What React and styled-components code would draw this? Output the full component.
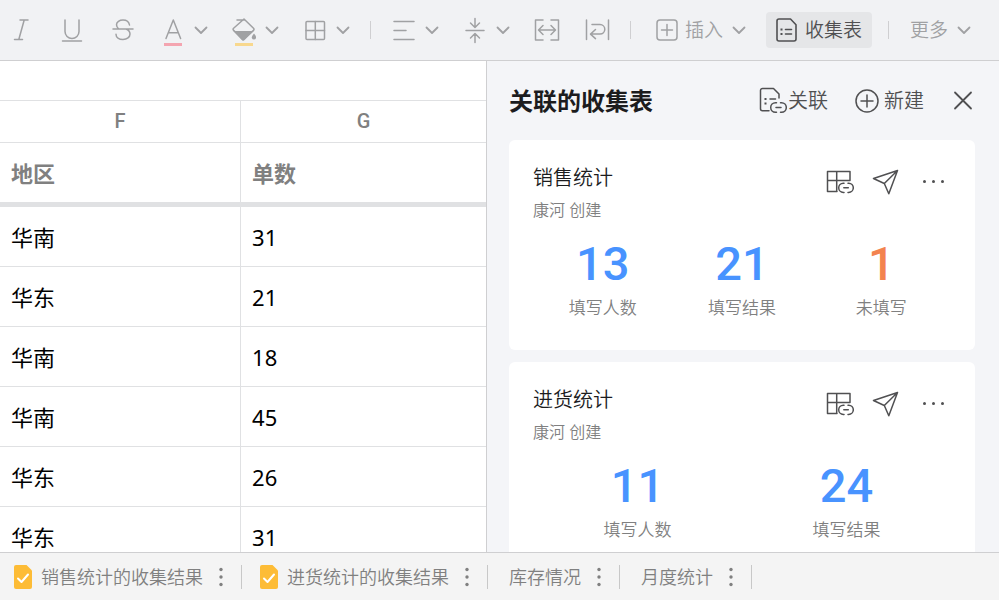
import React from 'react';
import styled, { createGlobalStyle, css } from 'styled-components';

const colors = {
  toolbar: '#f1f2f4',
  panel: '#f4f5f8',
  tabs: '#f4f4f4',
  line: '#cfcfd1',
  grid: '#e0e1e3',
  icon: '#a0a1a3',
  dark: '#505052',
  ink: '#1c1c1e',
  grey: '#808080',
  blue: '#4893ff',
  orange: '#f3834f',
  yellow: '#fdbc36',
};

const GlobalStyle = createGlobalStyle`
  * {
    box-sizing: border-box;
  }
  body {
    margin: 0;
    font-family: 'Noto Sans', 'Noto Sans CJK SC', sans-serif;
    font-weight: 350;
  }
  h2, h3, p, dl, dd {
    margin: 0;
  }
`;

const Page = styled.div`
  height: 100vh;
  display: flex;
  flex-direction: column;
  overflow: hidden;
`;

/* toolbar */

const Toolbar = styled.div`
  flex: none;
  display: flex;
  align-items: center;
  height: 61px;
  padding: 0 27px 0 9px;
  background-color: ${colors.toolbar};
  border-bottom: 1px solid ${colors.line};
`;

const Group = styled.div`
  display: flex;
  align-items: center;
  gap: ${props => props.$gap}px;
  margin-right: ${props => props.$after}px;
`;

const ToolbarEnd = styled.div`
  margin-left: auto;
  display: flex;
  align-items: center;
`;

const Divider = styled.span`
  width: 1px;
  height: 18px;
  margin-right: 21px;
  background-color: ${colors.line};
`;

const Plain = styled.button`
  display: flex;
  align-items: center;
  padding: 0;
  border: 0;
  background: none;
  color: inherit;
  font: inherit;
  white-space: nowrap;
  cursor: pointer;
`;

const Tool = styled(Plain)`
  gap: 8px;
  color: ${colors.icon};
  font-size: 19px;
  line-height: 32px;
`;

const InsertTool = styled(Tool)`
  padding: 0 3px;
  span {
    display: flex;
    align-items: center;
    gap: 6px;
  }
`;

const FormTool = styled(Tool)`
  height: 36px;
  margin-right: 16px;
  padding: 0 10px;
  border-radius: 4px;
  color: ${colors.dark};
  background-color: #e5e6e8;
`;

const Svg = styled.svg`
  flex: none;
  display: block;
  fill: none;
  stroke: currentColor;
  stroke-width: ${props => props.$weight || 1.5};
  stroke-linecap: round;
  stroke-linejoin: round;
  .solid {
    fill: currentColor;
    stroke: none;
  }
`;

/* sheet */

const Main = styled.div`
  flex: 1;
  min-height: 0;
  display: grid;
  grid-template-columns: 487fr 512fr;
`;

const Sheet = styled.div`
  overflow: hidden;
  padding-top: 39px;
  border-right: 1px solid ${colors.line};
  background-color: #fff;
`;

const Table = styled.table`
  width: 100%;
  table-layout: fixed;
  border-collapse: separate;
  border-spacing: 0;
  border-top: 1px solid ${colors.grid};
  font-size: 22px;
  line-height: 32px;
  color: #000;
`;

const cell = css`
  padding: 0 11px;
  text-align: left;
  border-bottom: 1px solid ${colors.grid};
  &:first-child {
    width: 49.6%;
    border-right: 1px solid ${colors.grid};
  }
`;

const Cell = styled.td`
  ${cell}
  height: 60px;
  font-weight: 400;
`;

const Letter = styled.th`
  ${cell}
  height: 42px;
  padding-bottom: 2px;
  text-align: center;
  font-family: Roboto, sans-serif;
  font-size: 20px;
  font-weight: 500;
  color: ${colors.grey};
`;

const Label = styled.th`
  ${cell}
  height: 64px;
  border-bottom: 5px solid ${colors.grid};
  font-weight: 700;
  color: ${colors.grey};
`;

/* side panel */

const Panel = styled.aside`
  overflow: hidden;
  padding: 0 24px 0 22px;
  background-color: ${colors.panel};
`;

const PanelHeader = styled.div`
  display: flex;
  align-items: center;
  justify-content: space-between;
  height: 79px;
`;

const PanelTitle = styled.h2`
  font-size: 24px;
  line-height: 32px;
  color: ${colors.ink};
`;

const PanelActions = styled.div`
  display: flex;
  align-items: center;
  gap: 27px;
  color: ${colors.dark};
`;

const PanelButton = styled(Plain)`
  gap: ${props => props.$gap || 0}px;
  font-size: 20px;
  line-height: 32px;
`;

const Card = styled.section`
  margin-bottom: 12px;
  padding: 22px 24px 26px;
  border-radius: 6px;
  background-color: #fff;
`;

const CardHeader = styled.div`
  display: flex;
  justify-content: space-between;
  line-height: 32px;
`;

const CardTitle = styled.h3`
  font-size: 20px;
  font-weight: 350;
  color: ${colors.ink};
`;

const Author = styled.p`
  font-size: 16px;
  color: ${colors.grey};
`;

const CardActions = styled.div`
  display: flex;
  align-items: flex-start;
  gap: 18px;
  padding: 5px 5px 0 0;
  color: ${colors.dark};
`;

const Stats = styled.dl`
  display: grid;
  grid-auto-flow: column;
  grid-auto-columns: 1fr;
  margin-top: 14px;
  text-align: center;
`;

const Stat = styled.div`
  display: flex;
  flex-direction: column-reverse;
  gap: 4px;
  dt {
    font-size: 17px;
    line-height: 32px;
    color: ${colors.grey};
  }
  dd {
    font-family: Roboto, sans-serif;
    font-size: 47px;
    font-weight: 500;
    line-height: 48px;
    color: ${props => (props.$warn ? colors.orange : colors.blue)};
  }
`;

/* sheet tabs */

const Tabs = styled.nav`
  flex: none;
  display: flex;
  align-items: center;
  height: 48px;
  border-top: 1px solid ${colors.line};
  background-color: ${colors.tabs};
  color: ${colors.grey};
`;

const Tab = styled.div`
  display: flex;
  align-items: center;
  gap: 12px;
  height: 24px;
  padding: 0 14px 0 ${props => (props.$form ? 18 : 21)}px;
  border-right: 1px solid #c8c8c8;
  &:first-child {
    padding-left: 14px;
  }
`;

const TabName = styled(Plain)`
  gap: 9px;
  font-size: 18px;
  line-height: 24px;
`;

const Icon = ({ width = 24, height = 32, weight, children }) => (
  <Svg
    width={ width }
    height={ height }
    viewBox={ `0 0 ${width} ${height}` }
    $weight={ weight }
    aria-hidden="true"
  >
    {children}
  </Svg>
);

const Chevron = () => (
  <Icon width={ 16 } weight={ 1.8 }>
    <path d="M2.5 13.5 8 19l5.5-5.5" />
  </Icon>
);

const FontColor = () => (
  <Icon>
    <path d="M5 24.5 12.3 6l7.3 18.5M7.5 18.8h9.6" />
    <rect x="3" y="29" width="18" height="3" stroke="none" fill="#f4a5b0" />
  </Icon>
);

const FillColor = () => (
  <Icon>
    <path d="M5 6h7M12 5 1.6 14.2a1.6 1.6 0 0 0 0 2.2l9.4 9.2 10.5-9.2a1.6 1.6 0 0 0 0-2.2z" />
    <path className="solid" d="M1.5 17h20.2L12.6 26a2 2 0 0 1-2.8 0z" />
    <path className="solid" d="M22 19.5c1.6 2 2.3 3.2 2 4.4a2.2 2.2 0 0 1-4.2 0c-.2-1.2.6-2.4 2.2-4.4z" />
    <rect x="3" y="29" width="18" height="3" stroke="none" fill="#f8d88e" />
  </Icon>
);

const Borders = () => (
  <Icon>
    <rect x="3" y="7.5" width="18.5" height="18" rx="1" />
    <path d="M12.3 7.5v18M3 16.5h18.5" />
  </Icon>
);

const AlignLeft = () => (
  <Icon>
    <path d="M2 7.5h20M2 16.5h12M2 25.5h20" />
  </Icon>
);

const AlignMiddle = () => (
  <Icon>
    <path d="M3 16.5h18M12 4.5V13M7.5 9l4.5 4.5L16.5 9M12 28.5V20M7.5 24l4.5-4.5 4.5 4.5" />
  </Icon>
);

const FormIcon = () => (
  <Icon width={ 21 } height={ 24 } weight={ 1.6 }>
    <path d="M3 1h11.5L20 6.7V21a2 2 0 0 1-2 2H3a2 2 0 0 1-2-2V3a2 2 0 0 1 2-2zM9.5 11.5h6M9.5 16h6" />
    <rect className="solid" x="4.5" y="10.5" width="2" height="2" />
    <rect className="solid" x="4.5" y="15" width="2" height="2" />
  </Icon>
);

const LinkForm = () => (
  <Icon width={ 28 } height={ 28 }>
    <path d="M10 23.7H3.5a2 2 0 0 1-2-2V3.5a2 2 0 0 1 2-2h11L20 7v4M11 12h5.5" />
    <path d="M17.5 15.7h-1a4.8 4.8 0 0 0 0 9.6h1M21.5 15.7h1a4.8 4.8 0 0 1 0 9.6h-1M17 20.5h5" />
    <rect className="solid" x="5.5" y="11" width="2" height="2" />
    <rect className="solid" x="5.5" y="15.5" width="2" height="2" />
  </Icon>
);

const LinkTable = () => (
  <Icon width={ 28 } height={ 28 }>
    <path d="M11 24.5H1.5v-20H24v9H1.5M10.7 4.5v20" />
    <path d="M18 16.2h-.7a4.6 4.6 0 0 0 0 9.2h.7M22 16.2h.7a4.6 4.6 0 0 1 0 9.2H22M17.8 20.8h4.5" />
  </Icon>
);

const Send = () => (
  <Icon width={ 28 } height={ 28 }>
    <path d="M25.5 3.5 1.5 11.5l10.8 5 4.5 10.3zM25.5 3.5 12.3 16.5" />
  </Icon>
);

const Dots = () => (
  <Icon width={ 28 } height={ 28 }>
    <circle className="solid" cx="6.5" cy="14.5" r="1.5" />
    <circle className="solid" cx="15.5" cy="14.5" r="1.5" />
    <circle className="solid" cx="24.5" cy="14.5" r="1.5" />
  </Icon>
);

const TabDots = () => (
  <Icon width={ 12 } height={ 24 }>
    <circle className="solid" cx="6" cy="4.5" r="1.7" />
    <circle className="solid" cx="6" cy="12" r="1.7" />
    <circle className="solid" cx="6" cy="19.5" r="1.7" />
  </Icon>
);

const TabForm = () => (
  <Icon width={ 18 } height={ 24 } weight={ 2 }>
    <path d="M2 0h10.5L18 5.5V22a2 2 0 0 1-2 2H2a2 2 0 0 1-2-2V2a2 2 0 0 1 2-2z" stroke="none" fill={ colors.yellow } />
    <path d="m4 13.5 3.5 3.5 6.5-7.5" stroke="#fff" />
  </Icon>
);

const rows = [
  ['华南', 31],
  ['华东', 21],
  ['华南', 18],
  ['华南', 45],
  ['华东', 26],
  ['华东', 31],
];

const forms = [
  {
    title: '销售统计',
    stats: [
      { label: '填写人数', value: 13 },
      { label: '填写结果', value: 21 },
      { label: '未填写', value: 1, warn: true },
    ],
  },
  {
    title: '进货统计',
    stats: [
      { label: '填写人数', value: 11 },
      { label: '填写结果', value: 24 },
    ],
  },
];

const tabs = [
  { name: '销售统计的收集结果', form: true },
  { name: '进货统计的收集结果', form: true },
  { name: '库存情况' },
  { name: '月度统计' },
];

const FormCard = ({ title, stats }) => (
  <Card>
    <CardHeader>
      <div>
        <CardTitle>{title}</CardTitle>
        <Author>康河 创建</Author>
      </div>
      <CardActions>
        <Plain aria-label="关联表格"><LinkTable /></Plain>
        <Plain aria-label="发送"><Send /></Plain>
        <Plain aria-label="更多"><Dots /></Plain>
      </CardActions>
    </CardHeader>
    <Stats>
      {stats.map(stat => (
        <Stat key={ stat.label } $warn={ stat.warn }>
          <dt>{stat.label}</dt>
          <dd>{stat.value}</dd>
        </Stat>
      ))}
    </Stats>
  </Card>
);

const App = () => (
  <Page>
    <GlobalStyle />
    <Toolbar>
      <Group $gap={ 27 } $after={ 26 }>
        <Tool aria-label="斜体">
          <Icon><path d="M11 6h8M5.5 25.5h8M15.2 6 9.8 25.5" /></Icon>
        </Tool>
        <Tool aria-label="下划线">
          <Icon><path d="M5 6v11.5a7 7 0 0 0 14 0V6M2.5 27h19" /></Icon>
        </Tool>
        <Tool aria-label="删除线">
          <Icon>
            <path d="M18.5 11c-.5-3-3-5-6.5-5s-6.500 2-6.500 4.800c0 1.700.8 3 2.300 4.200M2 15h20M15 15c2.500 1 4 2.800 4 5 0 3.200-3 5.500-7 5.500s-7-2-7-5.200" />
          </Icon>
        </Tool>
      </Group>
      <Group $gap={ 23 } $after={ 19 }>
        <Tool aria-label="文字颜色"><FontColor /><Chevron /></Tool>
        <Tool aria-label="填充颜色"><FillColor /><Chevron /></Tool>
        <Tool aria-label="边框"><Borders /><Chevron /></Tool>
      </Group>
      <Divider />
      <Group $gap={ 23 } $after={ 23 }>
        <Tool aria-label="水平对齐"><AlignLeft /><Chevron /></Tool>
        <Tool aria-label="垂直对齐"><AlignMiddle /><Chevron /></Tool>
      </Group>
      <Group $gap={ 25 } $after={ 19 }>
        <Tool aria-label="合并单元格">
          <Icon width={ 26 }>
            <path d="M9 6H1.5v20H9M17 6h7.5v20H17M5 16h16M9 11.5 4.5 16 9 20.5M17 11.5l4.5 4.5-4.5 4.5" />
          </Icon>
        </Tool>
        <Tool aria-label="自动换行">
          <Icon width={ 26 }>
            <path d="M1.5 6v19.5M23.5 6v19.5M7 10.5h8a4.8 4.8 0 0 1 0 9.6H6M10.5 15.5 5.5 20.1l5 4.5" />
          </Icon>
        </Tool>
      </Group>
      <Divider />
      <InsertTool>
        <span>
          <Icon>
            <rect x="2" y="6" width="20" height="20" rx="3" />
            <path d="M6.5 16h11M12 10.5v11" />
          </Icon>
          插入
        </span>
        <Chevron />
      </InsertTool>
      <ToolbarEnd>
        <FormTool><FormIcon />收集表</FormTool>
        <Divider />
        <Tool>更多<Chevron /></Tool>
      </ToolbarEnd>
    </Toolbar>
    <Main>
      <Sheet>
        <Table>
          <thead>
            <tr>
              <Letter scope="col">F</Letter>
              <Letter scope="col">G</Letter>
            </tr>
            <tr>
              <Label scope="col">地区</Label>
              <Label scope="col">单数</Label>
            </tr>
          </thead>
          <tbody>
            {rows.map(([area, count], index) => (
              <tr key={ index }>
                <Cell>{area}</Cell>
                <Cell>{count}</Cell>
              </tr>
            ))}
          </tbody>
        </Table>
      </Sheet>
      <Panel>
        <PanelHeader>
          <PanelTitle>关联的收集表</PanelTitle>
          <PanelActions>
            <PanelButton $gap={ 1 }><LinkForm />关联</PanelButton>
            <PanelButton $gap={ 5 }>
              <Icon height={ 24 }>
                <circle cx="12" cy="12" r="11" />
                <path d="M12 6v12M6 12h12" />
              </Icon>
              新建
            </PanelButton>
            <PanelButton aria-label="关闭">
              <Icon height={ 24 } weight={ 1.8 }>
                <path d="m4 3.5 16 16M20 3.5l-16 16" />
              </Icon>
            </PanelButton>
          </PanelActions>
        </PanelHeader>
        {forms.map(form => <FormCard key={ form.title } { ...form } />)}
      </Panel>
    </Main>
    <Tabs>
      {tabs.map(tab => (
        <Tab key={ tab.name } $form={ tab.form }>
          <TabName>
            {tab.form && <TabForm />}
            {tab.name}
          </TabName>
          <Plain aria-label="菜单"><TabDots /></Plain>
        </Tab>
      ))}
    </Tabs>
  </Page>
);

export default App;
